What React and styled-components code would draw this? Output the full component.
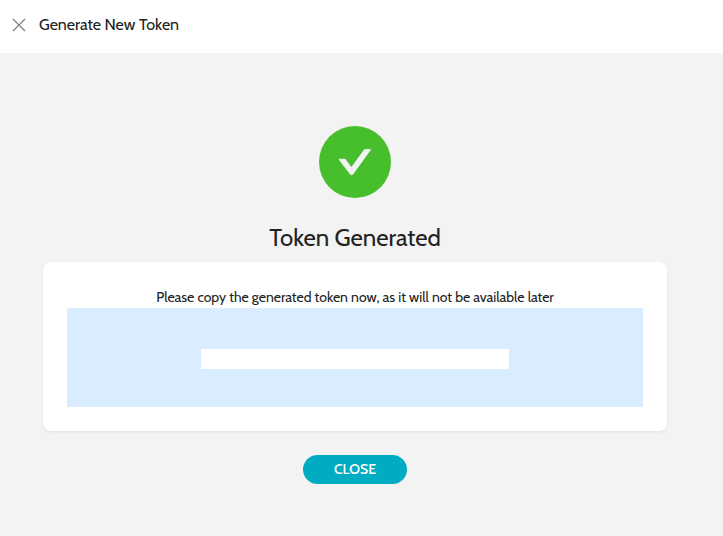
import { useState } from "react";
import styled, { createGlobalStyle } from "styled-components";

function CloseIcon() {
  return (
    <svg width="14" height="14" viewBox="0 0 14 14" aria-hidden="true">
      <path d="M1 1 L13 13 M13 1 L1 13" fill="none" stroke="#808080" strokeWidth="1.2" />
    </svg>
  );
}

function SuccessIcon() {
  return (
    <svg width="72" height="72" viewBox="0 0 72 72" aria-hidden="true">
      <circle cx="36" cy="36" r="36" fill="#47bf2c" />
      <path
        d="M20.6 32.8 H25.4 Q26.2 32.8 26.8 33.6 L32.4 41 L44.6 24.2 Q45.4 23 46.8 23 H51 Q52.4 23 51.6 24.2 L34.6 47.8 Q32.6 50.2 30.6 47.8 L20 34 Q19.4 32.8 20.6 32.8 Z"
        fill="#f3f3f3"
      />
    </svg>
  );
}

function App() {
  const [token] = useState("");

  return (
    <>
      <GlobalStyle />
      <Page>
        <Header>
          <IconButton type="button" aria-label="Close">
            <CloseIcon />
          </IconButton>
          <HeaderTitle>Generate New Token</HeaderTitle>
        </Header>
        <Content>
          <SuccessIcon />
          <Title>Token Generated</Title>
          <Card>
            <Message htmlFor="token">
              Please copy the generated token now, as it will not be available later
            </Message>
            <TokenBox>
              <TokenInput id="token" type="text" value={token} readOnly />
            </TokenBox>
          </Card>
          <CloseButton type="button">CLOSE</CloseButton>
        </Content>
      </Page>
    </>
  );
}

export default App;

const GlobalStyle = createGlobalStyle`
  * {
    box-sizing: border-box;
  }

  body {
    margin: 0;
    background: #f3f3f3;
    color: #222222;
    font-family: Cabin, Lato, "Liberation Sans", sans-serif;
    font-size: 14px;
  }

  button,
  input {
    border: none;
    font: inherit;
  }
`;

const Page = styled.div`
  display: flex;
  flex-direction: column;
  min-height: 100vh;
`;

const Header = styled.header`
  display: flex;
  align-items: center;
  gap: 13px;
  padding: 13px 12px 16px;
  background: #ffffff;
`;

const IconButton = styled.button`
  display: flex;
  padding: 0;
  background: none;
  cursor: pointer;
`;

const HeaderTitle = styled.h1`
  margin: 0;
  font-size: 16px;
  font-weight: 400;
  line-height: 24px;
`;

const Content = styled.main`
  display: flex;
  flex: 1;
  flex-direction: column;
  align-items: center;
  padding: 73px 56px 24px 43px;
`;

const Title = styled.h2`
  margin: 24px 0 8px;
  font-size: 24px;
  font-weight: 400;
  line-height: 32px;
`;

const Card = styled.section`
  display: flex;
  flex-direction: column;
  align-items: center;
  width: 100%;
  margin-bottom: 24px;
  padding: 24px;
  border-radius: 8px;
  background: #ffffff;
  box-shadow: 0 1px 3px rgba(0, 0, 0, 0.08);
`;

const Message = styled.label`
  font-size: 14px;
  line-height: 22px;
  text-align: center;
`;

const TokenBox = styled.div`
  display: flex;
  justify-content: center;
  width: 100%;
  padding: 41px 24px 38px;
  background: #daecff;
`;

const TokenInput = styled.input`
  width: 100%;
  max-width: 308px;
  height: 20px;
  padding: 0 8px;
  background: #ffffff;
  text-align: center;
`;

const CloseButton = styled.button`
  min-width: 104px;
  padding: 4px 24px 5px;
  border-radius: 16px;
  background: #00acc1;
  color: #ffffff;
  font-size: 14px;
  font-weight: 500;
  line-height: 20px;
  cursor: pointer;
`;
